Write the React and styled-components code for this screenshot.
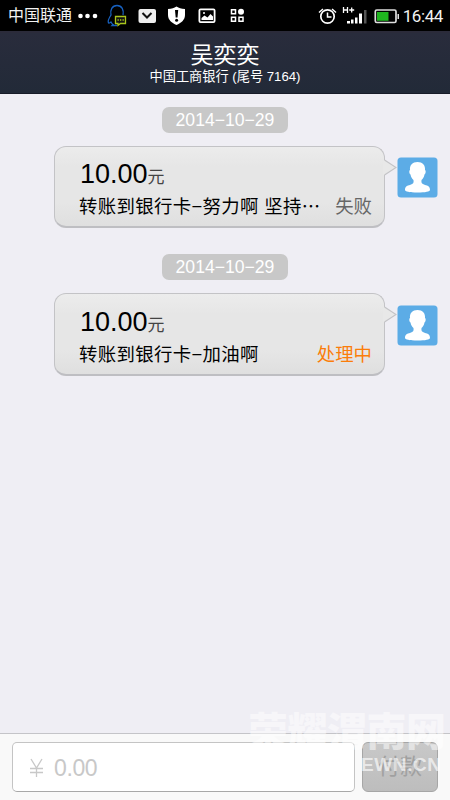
import React from "react";
import styled, { createGlobalStyle } from "styled-components";

const Global = createGlobalStyle`
  * { box-sizing: border-box; }
  body { margin: 0; background: #efeef4; }
`;

const Screen = styled.div`
  position: relative;
  display: flex;
  flex-direction: column;
  width: 450px;
  height: 800px;
  overflow: hidden;
  background: #efeef4;
  font-family: "Liberation Sans", "Noto Sans CJK SC", sans-serif;
  white-space: nowrap;
`;

const StatusBar = styled.div`
  display: flex;
  align-items: center;
  flex: none;
  height: 31px;
  padding: 0 7px 0 8px;
  background: #000;
  color: #f2f2f2;
`;

const Carrier = styled.span`
  width: 70px;
  font-size: 16px;
  line-height: 20px;
  padding-top: 1px;
`;

const StatusIcons = styled.svg`
  flex: none;
  width: 322px;
  height: 31px;
`;

const Clock = styled.span`
  margin-left: 4px;
  font: 17px/32px Roboto, sans-serif;
  letter-spacing: -0.4px;
`;

const Header = styled.header`
  display: flex;
  flex-direction: column;
  align-items: center;
  flex: none;
  height: 63px;
  padding-top: 10px;
  border-top: 2px solid #2b2b3a;
  border-bottom: 1px solid #171c28;
  background: linear-gradient(#292c3c, #222a38);
  color: #fff;
`;

const Name = styled.h1`
  margin: 0;
  font-size: 23px;
  font-weight: 400;
  line-height: 24px;
`;

const Account = styled.div`
  font-size: 13.2px;
  line-height: 19px;
`;

const Messages = styled.main`
  display: flex;
  flex-direction: column;
  flex: 1;
  min-height: 0;
  padding-top: 13px;
`;

const Entry = styled.section`
  display: flex;
  flex-direction: column;
  height: 147px;
`;

const DatePill = styled.time`
  align-self: center;
  width: 126px;
  height: 26px;
  border-radius: 7px;
  background: #c8c8c8;
  color: #fff;
  font-size: 17.6px;
  line-height: 26px;
  text-align: center;
`;

const MessageRow = styled.div`
  display: flex;
  margin: 13px 12px 0 54px;
`;

const Bubble = styled.article`
  position: relative;
  width: 331px;
  height: ${(p) => (p.$pending ? 83 : 82)}px;
  padding: ${(p) => (p.$pending ? 12 : 11)}px 12px 0 25px;
  border: 1px solid #c3c3c6;
  border-bottom: 2px solid #bebec2;
  border-radius: 12px;
  background: linear-gradient(#ececec, #e6e6e6 25%, #e6e6e6 70%, #dfdfdf);
`;

const Tail = styled.svg`
  position: absolute;
  left: 328px;
  top: 12px;
  width: 14px;
  height: 18px;
`;

const Amount = styled.div`
  height: 32px;
  color: #000;
  font-size: 27px;
  line-height: 32px;
`;

const Unit = styled.span`
  color: #444;
  font-size: 17px;
`;

const Detail = styled.div`
  display: flex;
  justify-content: space-between;
  height: 34px;
  margin-left: -1px;
  color: #000;
  font-size: 18.4px;
  line-height: 34px;
`;

const Note = styled.span`
  letter-spacing: 0.36px;
`;

const State = styled.span`
  color: ${(p) => (p.$pending ? "#fb7d0a" : "#666")};
`;

const Avatar = styled.svg`
  width: 41px;
  height: 41px;
  margin: ${(p) => (p.$pending ? 12 : 11)}px 0 0 12px;
`;

const PayBar = styled.footer`
  display: flex;
  gap: 7px;
  flex: none;
  height: 67px;
  padding: 8px 12px 0;
  border-top: 1px solid #c4c4c8;
  background: #f9f9f9;
`;

const AmountField = styled.div`
  display: flex;
  width: 343px;
  height: 50px;
  padding-left: 15px;
  border: 1px solid #c4c4c4;
  border-bottom-color: #a8a8a8;
  border-radius: 5px;
  background: #fff;
  color: #c8c8c8;
  font-size: 23px;
  line-height: 50px;
  letter-spacing: -0.4px;
`;

const Yen = styled.svg`
  width: 17px;
  height: 48px;
  margin-right: 9px;
`;

const PayButton = styled.button`
  width: 76px;
  height: 50px;
  padding: 0;
  border: 1px solid #a6a6a6;
  border-radius: 6px;
  background: linear-gradient(#c8c8c8, #bdbdbd);
  color: #a0a0a0;
  font: 22px/48px "Liberation Sans", "Noto Sans CJK SC", sans-serif;
`;

const Watermark = styled.div`
  position: absolute;
  left: 248px;
  top: 709px;
  color: rgba(255, 255, 255, 0.5);
  font-family: "Liberation Sans", "Noto Sans CJK SC", sans-serif;
  font-weight: 900;
  pointer-events: none;
`;

const WatermarkTitle = styled.div`
  font-size: 40px;
  line-height: 47px;
  letter-spacing: -0.5px;
`;

const WatermarkSite = styled.div`
  padding-left: 113px;
  color: rgba(255, 255, 255, 0.65);
  font-size: 19px;
  line-height: 18px;
  letter-spacing: 0.6px;
`;

function StatusGlyphs() {
  return (
    <StatusIcons viewBox="78 0 322 31" fill="none">
      <g fill="#fff">
        <circle cx="81.5" cy="16" r="2.3" />
        <circle cx="88.5" cy="16" r="2.3" />
        <circle cx="96" cy="16" r="2.3" />
      </g>
      <path d="M124 15c1-5-1-9.500-6-9.500s-7 4.500-6 9.500c-2 3-3.500 6-2.500 8 1 .5 2-1 2.500-1 .5 1 1 2 2 2.500l-1 1h5" stroke="#1761c0" strokeWidth="1.3" />
      <path d="M116.500 16.500h10v7h-5l-2.500 2v-2h-2.500z" fill="#111" stroke="#a9c51c" strokeWidth="1.300" />
      <path d="M118.500 20h1.300m1.200 0h1.300m1.200 0h1.300" stroke="#a9c51c" strokeWidth="1.300" />
      <rect x="139.500" y="9" width="17.500" height="14" rx="2" fill="#eee" />
      <path d="M143.500 13l4.500 4.500 4.500-4.500" stroke="#111" strokeWidth="2" />
      <path d="M169 9c4 0 6-1 8.500-2.500C180 8 182 9 186 9v6c0 5-4 8-8.500 10-4.500-2-8.500-5-8.500-10z" fill="#fff" />
      <path d="M176 10h3.200l-.7 7.500h-1.800z" fill="#000" />
      <circle cx="177.600" cy="20.300" r="1.500" fill="#000" />
      <rect x="200.400" y="9.400" width="15.200" height="12.800" rx="1.200" stroke="#fff" strokeWidth="1.800" />
      <path d="M202.500 20v-2l3-2.500 3 2 3-3.500 2.500 2.500V20z" fill="#fff" />
      <circle cx="205" cy="13" r="1" fill="#fff" />
      <path d="M232.500 9.700h4v4h-4zm0 7.500h4v4h-4zm7.500 0h4v4h-4z" stroke="#fff" strokeWidth="1.500" />
      <circle cx="242" cy="11.700" r="3" fill="#fff" />
      <circle cx="328.500" cy="16.500" r="6.700" stroke="#fff" strokeWidth="1.700" />
      <path d="M328.500 12.500V17h4M320 12.500l4-3.500m9 0l4 3.500" stroke="#fff" strokeWidth="1.500" />
      <path d="M344.500 7v6m4-6v6m-4-3h4m1.700 0h5m-2.500-2.500v5" stroke="#fff" strokeWidth="1.300" />
      <path d="M348 21h3v2.500h-3zm4-1.500h2.500v4H352zm4-2h2.500v6H356zm4-4h3v10h-3z" fill="#fff" />
      <path d="M365 10h2.500v13.500H365z" fill="#555" />
      <rect x="376.300" y="10" width="20.700" height="12.500" rx="1.500" stroke="#ddd" strokeWidth="1.700" />
      <path d="M398.500 14h1.500v5h-1.500z" fill="#ddd" />
      <path d="M378 12h11.500v8.800H378z" fill="#1fb51f" />
    </StatusIcons>
  );
}

function Person({ pending }) {
  return (
    <Avatar viewBox="0 0 41 41" $pending={pending}>
      <rect x=".5" y=".5" width="40" height="40" rx="3.500" fill="#5cace6" />
      <path fill="#fff" d="M20.500 5c5 0 8 3 7.500 8 1 .2 1 3.500-.5 4.500-.6 3-1.500 4-3 5.500-.5 3 .5 4 3 4.700 4 1.200 5.500 2 5.500 5.300 0 1.600-4.500 2.500-12.500 2.500S8 34.600 8 33c0-3.300 1.500-4.100 5.500-5.300 2.500-.7 3.500-1.700 3-4.700-1.500-1.500-2.400-2.500-3-5.500-1.500-1-1.500-4.300-.5-4.500-.5-5 2.500-8 7.500-8z" />
    </Avatar>
  );
}

const transfers = [
  { date: "2014−10−29", amount: "10.00", note: "转账到银行卡−努力啊 坚持⋯", state: "失败" },
  { date: "2014−10−29", amount: "10.00", note: "转账到银行卡−加油啊", state: "处理中", pending: true },
];

function Transfer({ item }) {
  return (
    <Entry>
      <DatePill>{item.date}</DatePill>
      <MessageRow>
        <Bubble $pending={item.pending}>
          <Amount>{item.amount}<Unit>元</Unit></Amount>
          <Detail>
            <Note>{item.note}</Note>
            <State $pending={item.pending}>{item.state}</State>
          </Detail>
          <Tail viewBox="0 0 14 18">
            <path d="M0 1h2L13 8.500 2 16H0z" fill="#e8e8e8" />
            <path d="M1.500 1L13 8.500 1.500 16" fill="none" stroke="#c3c3c6" strokeWidth="1.200" />
          </Tail>
        </Bubble>
        <Person pending={item.pending} />
      </MessageRow>
    </Entry>
  );
}

export default function App() {
  return (
    <Screen>
      <Global />
      <StatusBar>
        <Carrier>中国联通</Carrier>
        <StatusGlyphs />
        <Clock>16:44</Clock>
      </StatusBar>
      <Header>
        <Name>吴奕奕</Name>
        <Account>中国工商银行 (尾号 7164)</Account>
      </Header>
      <Messages>
        {transfers.map((item, i) => <Transfer key={i} item={item} />)}
      </Messages>
      <PayBar>
        <AmountField>
          <Yen viewBox="0 0 17 48">
            <path d="M3 16l5.500 9L14 16M8.500 25v9M2 25.500h13M2 29.500h13" fill="none" stroke="#c8c8c8" strokeWidth="1.300" />
          </Yen>
          0.00
        </AmountField>
        <PayButton>付款</PayButton>
      </PayBar>
      <Watermark>
        <WatermarkTitle>荣耀渭南网</WatermarkTitle>
        <WatermarkSite>EWN.CN</WatermarkSite>
      </Watermark>
    </Screen>
  );
}
